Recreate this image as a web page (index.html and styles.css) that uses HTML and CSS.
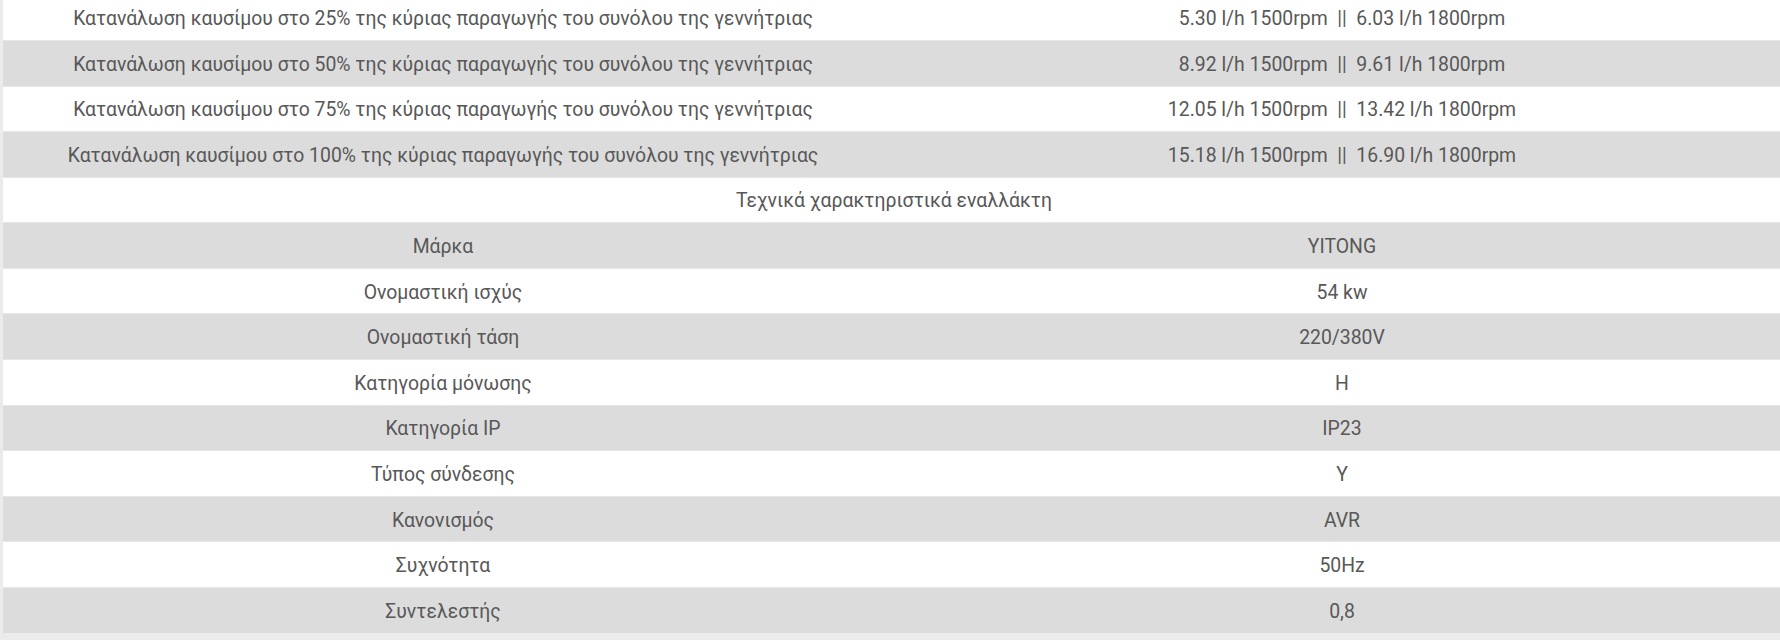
FILE: index.html
```html
<!DOCTYPE html>
<html lang="el">
<head>
<meta charset="utf-8">
<title>Τεχνικά χαρακτηριστικά</title>
<link rel="stylesheet" href="styles.css">
</head>
<body>
<div class="sheet">
  <div class="row"><div class="cell key">Κατανάλωση καυσίμου στο 25% της κύριας παραγωγής του συνόλου της γεννήτριας</div><div class="cell val">5.30 l/h 1500rpm &nbsp;||&nbsp; 6.03 l/h 1800rpm</div></div>
  <div class="row alt"><div class="cell key">Κατανάλωση καυσίμου στο 50% της κύριας παραγωγής του συνόλου της γεννήτριας</div><div class="cell val">8.92 l/h 1500rpm &nbsp;||&nbsp; 9.61 l/h 1800rpm</div></div>
  <div class="row"><div class="cell key">Κατανάλωση καυσίμου στο 75% της κύριας παραγωγής του συνόλου της γεννήτριας</div><div class="cell val">12.05 l/h 1500rpm &nbsp;||&nbsp; 13.42 l/h 1800rpm</div></div>
  <div class="row alt"><div class="cell key">Κατανάλωση καυσίμου στο 100% της κύριας παραγωγής του συνόλου της γεννήτριας</div><div class="cell val">15.18 l/h 1500rpm &nbsp;||&nbsp; 16.90 l/h 1800rpm</div></div>
  <div class="row head"><div class="cell span">Τεχνικά χαρακτηριστικά εναλλάκτη</div></div>
  <div class="row alt"><div class="cell key">Μάρκα</div><div class="cell val">YITONG</div></div>
  <div class="row"><div class="cell key">Ονομαστική ισχύς</div><div class="cell val">54 kw</div></div>
  <div class="row alt"><div class="cell key">Ονομαστική τάση</div><div class="cell val">220/380V</div></div>
  <div class="row"><div class="cell key">Κατηγορία μόνωσης</div><div class="cell val">H</div></div>
  <div class="row alt"><div class="cell key">Κατηγορία IP</div><div class="cell val">IP23</div></div>
  <div class="row"><div class="cell key">Τύπος σύνδεσης</div><div class="cell val">Y</div></div>
  <div class="row alt"><div class="cell key">Κανονισμός</div><div class="cell val">AVR</div></div>
  <div class="row"><div class="cell key">Συχνότητα</div><div class="cell val">50Hz</div></div>
  <div class="row alt"><div class="cell key">Συντελεστής</div><div class="cell val">0,8</div></div>
</div>
</body>
</html>
```

FILE: styles.css
```css
html, body {
  margin: 0;
  padding: 0;
  overflow: hidden;
  background: #ebebeb;
}
body {
  font-family: Roboto, "Noto Sans", sans-serif;
  font-size: 19.4px;
  color: #585858;
}
.sheet {
  width: 1798px;
  margin-left: 3px;
  margin-top: -4.7px;
  display: flex;
  flex-direction: column;
  gap: 1px;
  background: #e6e6e6;
}
.row {
  display: grid;
  grid-template-columns: 880px 1fr;
  height: 44.6px;
  background: #ffffff;
}
.row.alt {
  background: #dcdcdc;
}
.cell {
  display: flex;
  align-items: center;
  justify-content: center;
  white-space: nowrap;
  padding-top: 2px;
}
.span {
  grid-column: 1 / -1;
  padding-right: 16px;
}
```
